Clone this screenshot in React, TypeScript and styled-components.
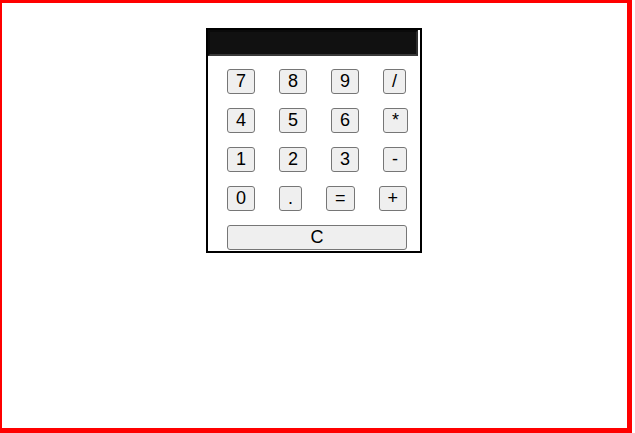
import React from "react";
import styled, { createGlobalStyle } from "styled-components";

const Global = createGlobalStyle`
  html, body {
    margin: 0;
    padding: 0;
    background: #ffffff;
    overflow: hidden;
  }
  body {
    font-family: "Liberation Sans", Arial, sans-serif;
  }
`;

const Frame = styled.div`
  box-sizing: border-box;
  width: 632px;
  height: 433px;
  border-style: solid;
  border-color: #ff0000;
  border-width: 3px 5px 5px 2px;
  display: flex;
  justify-content: center;
  align-items: flex-start;
  padding: 25px 1px 0 0;
`;

const Calculator = styled.div`
  box-sizing: border-box;
  width: 216px;
  height: 225px;
  border: 2px solid #000000;
  background: #ffffff;
  display: flex;
  flex-direction: column;
  overflow: hidden;
`;

const Display = styled.div`
  box-sizing: border-box;
  width: 210px;
  height: 26px;
  background: #111111;
  border-style: solid;
  border-width: 2px;
  border-color: #0a0a0a #2e2e2e #3a3a3a #0a0a0a;
`;

const Keypad = styled.div`
  display: flex;
  flex-direction: column;
  gap: 14px;
  padding: 13px 0 0 19px;
`;

const Row = styled.div`
  display: flex;
  gap: 24px;
`;

const Key = styled.button<{ $wide?: boolean }>`
  box-sizing: border-box;
  height: 25px;
  width: ${(p) => (p.$wide ? "180px" : "auto")};
  padding: 1px 8px;
  margin: 0;
  border: 1px solid #767676;
  border-radius: 3px;
  background: #efefef;
  color: #000000;
  font-family: "Liberation Sans", Arial, sans-serif;
  font-size: 18px;
  line-height: 21px;
  text-align: center;
  cursor: pointer;
`;

const rows = [
  ["7", "8", "9", "/"],
  ["4", "5", "6", "*"],
  ["1", "2", "3", "-"],
  ["0", ".", "=", "+"],
];

export default function App() {
  return (
    <>
      <Global />
      <Frame>
        <Calculator>
          <Display />
          <Keypad>
            {rows.map((r, i) => (
              <Row key={i}>
                {r.map((k) => (
                  <Key key={k}>{k}</Key>
                ))}
              </Row>
            ))}
            <Row>
              <Key $wide>C</Key>
            </Row>
          </Keypad>
        </Calculator>
      </Frame>
    </>
  );
}
